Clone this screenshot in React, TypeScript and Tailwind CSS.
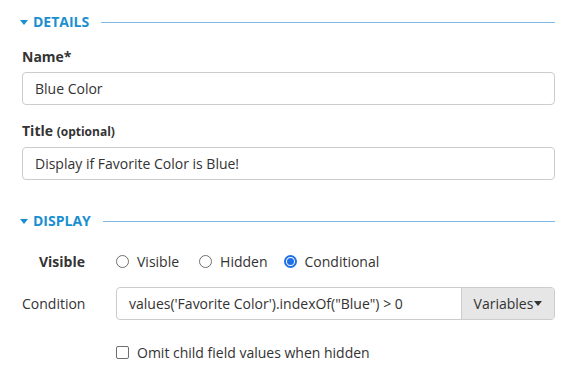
import React from 'react';

const font = { fontFamily: '"Open Sans", "Noto Sans", sans-serif' };

const SectionHeader: React.FC<{ title: string }> = ({ title }) => (
  <div className="flex items-center h-[14px]">
    <svg width="8" height="5" viewBox="0 0 8 5" className="ml-[20px] mr-[5px]">
      <path d="M0 0 H8 L4 5 Z" fill="#1a8fd0" />
    </svg>
    <span className="text-[14px] font-bold text-[#1a8fd0] leading-none">{title}</span>
    <div className="flex-1 h-px bg-[#82b8e4] ml-[12px]" />
  </div>
);

const Radio: React.FC<{ label: string; checked?: boolean; className?: string }> = ({ label, checked, className }) => (
  <label className={`flex items-center gap-[8px] ${className ?? ''}`}>
    {checked ? (
      <span className="w-[13px] h-[13px] rounded-full border-[2px] border-[#1f6fe6] flex items-center justify-center">
        <span className="w-[7px] h-[7px] rounded-full bg-[#1f6fe6]" />
      </span>
    ) : (
      <span className="w-[13px] h-[13px] rounded-full border border-[#6f6f6f]" />
    )}
    <span className="text-[14px] text-[#333]">{label}</span>
  </label>
);

export default function App() {
  return (
    <div className="w-[573px] h-[380px] bg-white text-[#333] pr-[18px]" style={font}>
      <div className="pt-[15px]">
        <SectionHeader title="DETAILS" />
      </div>

      <div className="pl-[22px] pt-[18px]">
        <div className="text-[14px] font-bold leading-[20px]">Name*</div>
        <div className="mt-[5px] h-[33px] border border-[#ccc] rounded-[4px] flex items-center px-[12px] text-[14px]">
          Blue Color
        </div>

        <div className="mt-[16px] text-[14px] font-bold leading-[20px]">
          Title <span className="text-[12px]">(optional)</span>
        </div>
        <div className="mt-[5px] h-[33px] border border-[#ccc] rounded-[4px] flex items-center px-[12px] text-[14px]">
          Display if Favorite Color is Blue!
        </div>
      </div>

      <div className="pt-[34px]">
        <SectionHeader title="DISPLAY" />
      </div>

      <div className="pl-[22px] pt-[23px]">
        <div className="flex items-center h-[20px]">
          <div className="w-[63px] text-right text-[14px] font-bold">Visible</div>
          <div className="ml-[31px] flex items-center">
            <Radio label="Visible" className="mr-[20px]" />
            <Radio label="Hidden" className="mr-[16px]" />
            <Radio label="Conditional" checked />
          </div>
        </div>

        <div className="mt-[16px] flex items-center">
          <div className="w-[94px] text-[14px]">Condition</div>
          <div className="flex-1 flex h-[33px] border border-[#ccc] rounded-[4px] overflow-hidden">
            <div className="flex-1 flex items-center px-[12px] text-[14px]">
              values('Favorite Color').indexOf("Blue") &gt; 0
            </div>
            <div className="w-[93px] border-l border-[#ccc] bg-[#e6e6e6] flex items-center justify-center text-[14px]">
              Variables
              <svg width="8" height="5" viewBox="0 0 8 5" className="ml-[1px]">
                <path d="M0 0 H8 L4 5 Z" fill="#333" />
              </svg>
            </div>
          </div>
        </div>

        <div className="mt-[22px] ml-[94px] flex items-center gap-[8px] h-[20px]">
          <span className="w-[13px] h-[13px] rounded-[2px] border border-[#6f6f6f]" />
          <span className="text-[14px]">Omit child field values when hidden</span>
        </div>
      </div>
    </div>
  );
}
